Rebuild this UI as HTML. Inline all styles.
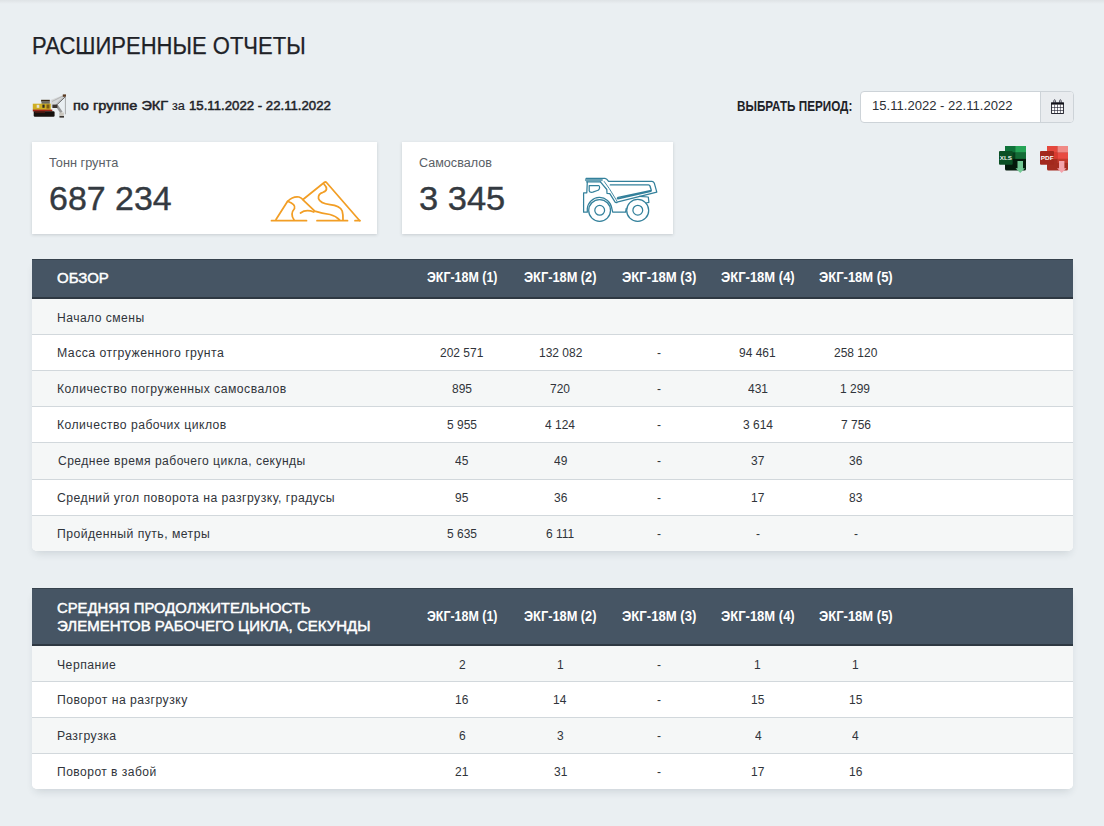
<!DOCTYPE html>
<html lang="ru"><head><meta charset="utf-8"><title>Расширенные отчеты</title>
<style>
html,body{margin:0;padding:0;}
body{width:1104px;height:826px;overflow:hidden;position:relative;background:#eaeff2;font-family:"Liberation Sans",sans-serif;}
.t{position:absolute;white-space:nowrap;transform-origin:0 0;}
.box{position:absolute;}
</style></head><body>
<div class="box" style="left:0;top:0;width:1104px;height:4px;background:linear-gradient(rgba(0,0,0,0.05),rgba(0,0,0,0));"></div>
<div class="box" style="left:32px;top:142px;width:345px;height:92px;background:#fff;box-shadow:0 1px 3px rgba(40,50,60,0.18);"></div>
<div class="box" style="left:402px;top:142px;width:271px;height:92px;background:#fff;box-shadow:0 1px 3px rgba(40,50,60,0.18);"></div>
<div class="box" style="left:32px;top:259px;width:1041px;height:292px;background:#fff;border-radius:0 0 5px 5px;box-shadow:0 5px 8px -3px rgba(40,55,70,0.16);overflow:hidden;">
<div class="box" style="left:0;top:0;width:1041px;height:39.5px;background:#465564;"></div>
<div class="box" style="left:0;top:0;width:1041px;height:1px;background:#36424d;"></div>
<div class="box" style="left:0;top:38.0px;width:1041px;height:1.5px;background:#2e3842;"></div>
<div class="box" style="left:0;top:39.5px;width:1041px;height:35.5px;background:#f5f7f7;"></div>
<div class="box" style="left:0;top:75px;width:1041px;height:36px;background:#ffffff;"></div>
<div class="box" style="left:0;top:111px;width:1041px;height:36px;background:#f5f7f7;"></div>
<div class="box" style="left:0;top:147px;width:1041px;height:36px;background:#ffffff;"></div>
<div class="box" style="left:0;top:183px;width:1041px;height:37px;background:#f5f7f7;"></div>
<div class="box" style="left:0;top:220px;width:1041px;height:36px;background:#ffffff;"></div>
<div class="box" style="left:0;top:256px;width:1041px;height:36px;background:#f5f7f7;"></div>
<div class="box" style="left:0;top:75px;width:1041px;height:1px;background:#d2d8dc;"></div>
<div class="box" style="left:0;top:111px;width:1041px;height:1px;background:#d2d8dc;"></div>
<div class="box" style="left:0;top:147px;width:1041px;height:1px;background:#d2d8dc;"></div>
<div class="box" style="left:0;top:183px;width:1041px;height:1px;background:#d2d8dc;"></div>
<div class="box" style="left:0;top:220px;width:1041px;height:1px;background:#d2d8dc;"></div>
<div class="box" style="left:0;top:256px;width:1041px;height:1px;background:#d2d8dc;"></div>
</div>
<div class="box" style="left:32px;top:588px;width:1041px;height:201px;background:#fff;border-radius:0 0 5px 5px;box-shadow:0 5px 8px -3px rgba(40,55,70,0.16);overflow:hidden;">
<div class="box" style="left:0;top:0;width:1041px;height:57.60000000000002px;background:#465564;"></div>
<div class="box" style="left:0;top:0;width:1041px;height:1px;background:#36424d;"></div>
<div class="box" style="left:0;top:56.10000000000002px;width:1041px;height:1.5px;background:#2e3842;"></div>
<div class="box" style="left:0;top:57.60000000000002px;width:1041px;height:35.39999999999998px;background:#f5f7f7;"></div>
<div class="box" style="left:0;top:93px;width:1041px;height:36px;background:#ffffff;"></div>
<div class="box" style="left:0;top:129px;width:1041px;height:36px;background:#f5f7f7;"></div>
<div class="box" style="left:0;top:165px;width:1041px;height:36px;background:#ffffff;"></div>
<div class="box" style="left:0;top:93px;width:1041px;height:1px;background:#d2d8dc;"></div>
<div class="box" style="left:0;top:129px;width:1041px;height:1px;background:#d2d8dc;"></div>
<div class="box" style="left:0;top:165px;width:1041px;height:1px;background:#d2d8dc;"></div>
</div>
<svg class="box" style="left:30px;top:90px" width="40" height="32" viewBox="30 90 40 32">
<path d="M50.5 100 L63.5 95 L65.6 96.6 L54.5 107.6 L50.5 107.2 Z" fill="#d6d8d9"/>
<path d="M54.3 107.3 L65.3 96.8" stroke="#4e4e4e" stroke-width="0.8"/>
<path d="M52 101.5 L63.8 95.6" stroke="#9a9a9a" stroke-width="0.6"/>
<path d="M56.5 104 L63.5 97.2" stroke="#8c8c8c" stroke-width="0.5"/>
<rect x="62.8" y="94.4" width="3.2" height="2.4" fill="#5b3b22"/>
<line x1="65.4" y1="96.5" x2="65.4" y2="114.3" stroke="#8c8c8c" stroke-width="0.7"/>
<path d="M56 104.5 L61.5 112.5" stroke="#9a9a9a" stroke-width="2.6"/>
<path d="M59 112.5 H63.8 V117.3 H59.5 Z" fill="#c9c5bd"/>
<rect x="59.5" y="116" width="4.5" height="1.6" fill="#3a3633"/>
<rect x="52.4" y="104.6" width="5" height="3.4" fill="#3b3430"/>
<rect x="41.1" y="99.8" width="8.7" height="1.8" fill="#3a2812"/>
<rect x="41.5" y="101.5" width="8.3" height="2.4" fill="#6d6a60"/>
<rect x="32.8" y="103.7" width="18" height="6.2" fill="#cfae22"/>
<rect x="36.7" y="104.8" width="2.6" height="3" fill="#e8e4d0"/>
<rect x="42.4" y="104.6" width="2.2" height="3.2" fill="#2c2a26"/>
<rect x="46.5" y="104.5" width="3" height="4" fill="#7a5a18"/>
<rect x="32.8" y="109.6" width="19.5" height="1.9" fill="#9e2418"/>
<path d="M33.7 111.2 H53.5 Q54.6 111.2 54.6 112.5 V115.6 Q54.6 116.8 53.5 116.8 H35 Q33.7 116.8 33.7 115.6 Z" fill="#17110e"/>
<rect x="35" y="111.2" width="10" height="1.5" fill="#5a1a12"/>
</svg>
<div class="box" style="left:860px;top:91px;width:212px;height:30px;border:1px solid #cdd3d8;border-radius:4px;background:#fff;overflow:hidden;">
<div class="box" style="left:179px;top:0;width:33px;height:30px;background:#e9ecef;border-left:1px solid #cdd3d8;"></div>
</div>
<svg class="box" style="left:1050px;top:98px" width="16" height="17" viewBox="1050 98 16 17">
<rect x="1051.6" y="103" width="11.8" height="10.5" fill="#fff" stroke="#15151f" stroke-width="0.9"/>
<rect x="1051.2" y="102.5" width="12.6" height="2.1" fill="#111118"/>
<path d="M1053.6 103 Q1053.8 99.6 1054.6 99.6 Q1055.4 99.6 1055.6 103 M1059.4 103 Q1059.6 99.6 1060.4 99.6 Q1061.2 99.6 1061.4 103" fill="none" stroke="#2a2a3a" stroke-width="0.85"/>
<path d="M1054.6 104.5 V113.5 M1057.5 104.5 V113.5 M1060.4 104.5 V113.5 M1051.5 107.5 H1063.5 M1051.5 110.5 H1063.5" stroke="#1a1a2a" stroke-width="0.6"/>
</svg>
<svg class="box" style="left:996px;top:143px" width="76" height="32" viewBox="996 143 76 32">
<g>
<rect x="1005" y="146" width="21" height="24.5" rx="1.5" fill="#041a0b"/>
<rect x="1005" y="146" width="10.2" height="6.7" fill="#10723a"/>
<rect x="1015.2" y="146" width="10.8" height="6.7" fill="#26a457"/>
<rect x="1005" y="152.7" width="10.2" height="6.2" fill="#073d1c"/>
<rect x="1015.2" y="152.7" width="10.8" height="6.2" fill="#146b36"/>
<rect x="999" y="151" width="13.7" height="13.8" rx="1" fill="#0b5024"/>
<text x="1005.9" y="159.8" font-family="Liberation Sans" font-size="5.6" font-weight="700" fill="#e8efe8" text-anchor="middle" transform="translate(1005.9 0) scale(1.12 1) translate(-1005.9 0)">XLS</text>
<path d="M1017.5 161 H1023 V168.3 H1025 L1020.25 173 L1015.5 168.3 H1017.5 Z" fill="#73c995"/>
</g>
<g>
<rect x="1047" y="146" width="21" height="24.5" rx="1.5" fill="#a52c20"/>
<rect x="1047" y="146" width="10.5" height="6.7" fill="#e4483d"/>
<rect x="1057.5" y="146" width="10.5" height="6.7" fill="#f08a86"/>
<rect x="1047" y="152.7" width="10.5" height="6.2" fill="#d8392f"/>
<rect x="1057.5" y="152.7" width="10.5" height="6.2" fill="#e84b42"/>
<rect x="1057.5" y="158.9" width="10.5" height="4" fill="#c33a2e"/>
<rect x="1040" y="151" width="14" height="13.7" rx="1" fill="#a3281d"/>
<text x="1047.2" y="159.8" font-family="Liberation Sans" font-size="5.8" font-weight="700" fill="#fff" text-anchor="middle" transform="translate(1047.2 0) scale(1.1 1) translate(-1047.2 0)">PDF</text>
<path d="M1059 161 H1064.4 V168.3 H1066.5 L1061.7 173 L1057 168.3 H1059 Z" fill="#f3a3ab"/>
</g>
</svg>
<svg class="box" style="left:265px;top:175px" width="100" height="52" viewBox="265 175 100 52">
<g fill="none" stroke="#f29e25" stroke-width="1.75" stroke-linecap="round" stroke-linejoin="round">
<path d="M271.5 220.7 H306.5 M317 220.7 H347.5 M355 220.7 H360"/>
<path d="M303 199.5 L324.5 182.3 Q325.5 181.6 326.5 182.5 L359.5 220.5"/>
<path d="M276 219.5 L287.6 201.3 Q293 196 299 197 Q301.5 197.8 303 199.8 L314.8 211.2 Q322 213.5 330 214.5 Q336 216 339.5 219.8"/>
<path d="M287.6 201.3 Q296 204.5 294.5 208.5 Q289.8 214 294 219.8"/>
<path d="M300.5 213 Q306 209 313.8 212"/>
<path d="M324 184.2 Q329.5 190 323 192.3 Q318 193.5 318.5 198.5 Q320 203.5 330 204.6 Q340 205.5 342.2 211 Q343.3 215 343 220"/>
</g></svg>
<svg class="box" style="left:575px;top:170px" width="90" height="58" viewBox="575 170 90 58">
<g fill="none" stroke="#33809b" stroke-width="1.25" stroke-linejoin="round" stroke-linecap="round">
<path d="M586.2 179.9 H601.5" stroke="#6aa3b6" stroke-width="2.6"/>
<path d="M586.1 178.3 H605 Q606.8 178.5 608.6 181.4 H652 Q653.8 181.6 654.3 183.2 L656.8 192.2 L616 202.3"/>
<path d="M586.6 181.8 H600.4"/>
<path d="M610.3 184.9 H648.5 Q649.6 185 650 186 L651.3 190.4 L618.2 197.4 Q616.6 198.3 618 198.9 L651 191.2" stroke-width="1.4"/>
<path d="M600.4 181.8 L606.8 189.5 L607 193.3 L609.8 193.6 L614.8 201.7 Q615.3 202.8 617 202.6"/>
<path d="M604.2 181.5 L609.3 188.6 L616.8 200.8" stroke-width="0.9"/>
<path d="M587.3 182 L586.8 192.8 H583.6 V212.2 H587.3 V208.5 A12.3 12.3 0 0 1 611.7 208 L612.7 212.2 H625.6 L626.2 208.5"/>
<path d="M589.2 185.5 H598.6 Q599.6 185.6 599.6 187.5 L599.2 189 Q598.8 190.2 597.4 190.5 L592.8 192.2 Q589.6 192.7 589.2 190.8 Z"/>
<circle cx="599.6" cy="210.4" r="10.9"/>
<circle cx="599.7" cy="210.3" r="4.9"/>
<circle cx="637.7" cy="210.4" r="11"/>
<circle cx="637.8" cy="210.2" r="4.9"/>
<path d="M639.2 196.4 L648.3 197 L648.9 202.3 L646 203"/>
</g></svg>
<div class="t" style="left:31.84px;top:31.54px;font-size:24.06px;line-height:28px;color:#1e2227;transform:scaleX(0.9155);-webkit-text-stroke:0.25px #1e2227;">РАСШИРЕННЫЕ ОТЧЕТЫ</div>
<div class="t" style="left:72.55px;top:96.77px;font-size:13.52px;line-height:18px;color:#1e2227;transform:scaleX(1.0759);-webkit-text-stroke:0.5px #1e2227;">по группе ЭКГ</div>
<div class="t" style="left:171.65px;top:97.46px;font-size:13.40px;line-height:17px;color:#1e2227;transform:scaleX(0.9492);-webkit-text-stroke:0.2px #1e2227;">за</div>
<div class="t" style="left:189.01px;top:97.32px;font-size:13.37px;line-height:17px;color:#1e2227;transform:scaleX(0.9878);-webkit-text-stroke:0.5px #1e2227;">15.11.2022 - 22.11.2022</div>
<div class="t" style="left:736.64px;top:97.45px;font-size:14.00px;line-height:18px;color:#1e2227;font-weight:700;transform:scaleX(0.8356);">ВЫБРАТЬ ПЕРИОД:</div>
<div class="t" style="left:871.52px;top:98.02px;font-size:12.65px;line-height:17px;color:#2b3036;transform:scaleX(1.0342);">15.11.2022 - 22.11.2022</div>
<div class="t" style="left:49.34px;top:153.87px;font-size:13.37px;line-height:17px;color:#5a6066;transform:scaleX(0.9548);">Тонн грунта</div>
<div class="t" style="left:418.87px;top:154.67px;font-size:12.21px;line-height:16px;color:#5a6066;transform:scaleX(1.0302);">Самосвалов</div>
<div class="t" style="left:49.20px;top:179.07px;font-size:33.87px;line-height:38px;color:#343a41;transform:scaleX(1.0030);-webkit-text-stroke:0.4px #343a41;">687 234</div>
<div class="t" style="left:419.29px;top:179.27px;font-size:33.87px;line-height:38px;color:#343a41;transform:scaleX(1.0174);-webkit-text-stroke:0.4px #343a41;">3 345</div>
<div class="t" style="left:56.93px;top:269.17px;font-size:13.88px;line-height:18px;color:#ffffff;transform:scaleX(1.0795);-webkit-text-stroke:0.45px #ffffff;">ОБЗОР</div>
<div class="t" style="left:426.99px;top:269.25px;font-size:13.71px;line-height:18px;color:#ffffff;font-weight:700;transform:scaleX(0.9072);">ЭКГ-18М (1)</div>
<div class="t" style="left:524.28px;top:269.25px;font-size:13.71px;line-height:18px;color:#ffffff;font-weight:700;transform:scaleX(0.9333);">ЭКГ-18М (2)</div>
<div class="t" style="left:621.87px;top:269.25px;font-size:13.71px;line-height:18px;color:#ffffff;font-weight:700;transform:scaleX(0.9568);">ЭКГ-18М (3)</div>
<div class="t" style="left:721.07px;top:269.25px;font-size:13.71px;line-height:18px;color:#ffffff;font-weight:700;transform:scaleX(0.9489);">ЭКГ-18М (4)</div>
<div class="t" style="left:818.87px;top:269.25px;font-size:13.71px;line-height:18px;color:#ffffff;font-weight:700;transform:scaleX(0.9489);">ЭКГ-18М (5)</div>
<div class="t" style="left:57.13px;top:308.77px;font-size:13.08px;line-height:17px;color:#30343a;letter-spacing:0.5px;transform:scaleX(0.9251);">Начало смены</div>
<div class="t" style="left:57.12px;top:344.27px;font-size:13.08px;line-height:17px;color:#30343a;letter-spacing:0.5px;transform:scaleX(0.9389);">Масса отгруженного грунта</div>
<div class="t" style="left:440.30px;top:344.17px;font-size:13.37px;line-height:17px;color:#30343a;transform:scaleX(0.8969);">202 571</div>
<div class="t" style="left:538.55px;top:344.17px;font-size:13.37px;line-height:17px;color:#30343a;transform:scaleX(0.8969);">132 082</div>
<div class="t" style="left:657.02px;top:344.17px;font-size:13.37px;line-height:17px;color:#30343a;transform:scaleX(0.8969);">-</div>
<div class="t" style="left:739.47px;top:344.17px;font-size:13.37px;line-height:17px;color:#30343a;transform:scaleX(0.8969);">94 461</div>
<div class="t" style="left:833.84px;top:344.17px;font-size:13.37px;line-height:17px;color:#30343a;transform:scaleX(0.8969);">258 120</div>
<div class="t" style="left:57.12px;top:380.27px;font-size:13.08px;line-height:17px;color:#30343a;letter-spacing:0.5px;transform:scaleX(0.9336);">Количество погруженных самосвалов</div>
<div class="t" style="left:452.00px;top:380.17px;font-size:13.37px;line-height:17px;color:#30343a;transform:scaleX(0.8969);">895</div>
<div class="t" style="left:550.31px;top:380.17px;font-size:13.37px;line-height:17px;color:#30343a;transform:scaleX(0.8969);">720</div>
<div class="t" style="left:657.02px;top:380.17px;font-size:13.37px;line-height:17px;color:#30343a;transform:scaleX(0.8969);">-</div>
<div class="t" style="left:747.95px;top:380.17px;font-size:13.37px;line-height:17px;color:#30343a;transform:scaleX(0.8969);">431</div>
<div class="t" style="left:840.42px;top:380.17px;font-size:13.37px;line-height:17px;color:#30343a;transform:scaleX(0.8969);">1 299</div>
<div class="t" style="left:57.13px;top:416.27px;font-size:13.08px;line-height:17px;color:#30343a;letter-spacing:0.5px;transform:scaleX(0.9312);">Количество рабочих циклов</div>
<div class="t" style="left:447.00px;top:416.17px;font-size:13.37px;line-height:17px;color:#30343a;transform:scaleX(0.8969);">5 955</div>
<div class="t" style="left:545.43px;top:416.17px;font-size:13.37px;line-height:17px;color:#30343a;transform:scaleX(0.8969);">4 124</div>
<div class="t" style="left:657.02px;top:416.17px;font-size:13.37px;line-height:17px;color:#30343a;transform:scaleX(0.8969);">-</div>
<div class="t" style="left:742.74px;top:416.17px;font-size:13.37px;line-height:17px;color:#30343a;transform:scaleX(0.8969);">3 614</div>
<div class="t" style="left:840.54px;top:416.17px;font-size:13.37px;line-height:17px;color:#30343a;transform:scaleX(0.8969);">7 756</div>
<div class="t" style="left:57.50px;top:452.27px;font-size:13.08px;line-height:17px;color:#30343a;letter-spacing:0.5px;transform:scaleX(0.9235);">Среднее время рабочего цикла, секунды</div>
<div class="t" style="left:455.46px;top:452.17px;font-size:13.37px;line-height:17px;color:#30343a;transform:scaleX(0.8969);">45</div>
<div class="t" style="left:553.89px;top:452.17px;font-size:13.37px;line-height:17px;color:#30343a;transform:scaleX(0.8969);">49</div>
<div class="t" style="left:657.02px;top:452.17px;font-size:13.37px;line-height:17px;color:#30343a;transform:scaleX(0.8969);">-</div>
<div class="t" style="left:751.20px;top:452.17px;font-size:13.37px;line-height:17px;color:#30343a;transform:scaleX(0.8969);">37</div>
<div class="t" style="left:848.97px;top:452.17px;font-size:13.37px;line-height:17px;color:#30343a;transform:scaleX(0.8969);">36</div>
<div class="t" style="left:57.49px;top:489.27px;font-size:13.08px;line-height:17px;color:#30343a;letter-spacing:0.5px;transform:scaleX(0.9343);">Средний угол поворота на разгрузку, градусы</div>
<div class="t" style="left:455.31px;top:489.17px;font-size:13.37px;line-height:17px;color:#30343a;transform:scaleX(0.8969);">95</div>
<div class="t" style="left:553.77px;top:489.17px;font-size:13.37px;line-height:17px;color:#30343a;transform:scaleX(0.8969);">36</div>
<div class="t" style="left:657.02px;top:489.17px;font-size:13.37px;line-height:17px;color:#30343a;transform:scaleX(0.8969);">-</div>
<div class="t" style="left:750.96px;top:489.17px;font-size:13.37px;line-height:17px;color:#30343a;transform:scaleX(0.8969);">17</div>
<div class="t" style="left:848.94px;top:489.17px;font-size:13.37px;line-height:17px;color:#30343a;transform:scaleX(0.8969);">83</div>
<div class="t" style="left:57.12px;top:525.27px;font-size:13.08px;line-height:17px;color:#30343a;letter-spacing:0.5px;transform:scaleX(0.9331);">Пройденный путь, метры</div>
<div class="t" style="left:447.00px;top:525.17px;font-size:13.37px;line-height:17px;color:#30343a;transform:scaleX(0.8969);">5 635</div>
<div class="t" style="left:546.26px;top:525.17px;font-size:13.37px;line-height:17px;color:#30343a;transform:scaleX(0.8969);">6 111</div>
<div class="t" style="left:657.02px;top:525.17px;font-size:13.37px;line-height:17px;color:#30343a;transform:scaleX(0.8969);">-</div>
<div class="t" style="left:755.82px;top:525.17px;font-size:13.37px;line-height:17px;color:#30343a;transform:scaleX(0.8969);">-</div>
<div class="t" style="left:853.62px;top:525.17px;font-size:13.37px;line-height:17px;color:#30343a;transform:scaleX(0.8969);">-</div>
<div class="t" style="left:56.86px;top:598.96px;font-size:14.46px;line-height:18px;color:#ffffff;transform:scaleX(1.0267);-webkit-text-stroke:0.45px #ffffff;">СРЕДНЯЯ ПРОДОЛЖИТЕЛЬНОСТЬ</div>
<div class="t" style="left:56.85px;top:616.86px;font-size:14.46px;line-height:18px;color:#ffffff;transform:scaleX(1.0385);-webkit-text-stroke:0.45px #ffffff;">ЭЛЕМЕНТОВ РАБОЧЕГО ЦИКЛА, СЕКУНДЫ</div>
<div class="t" style="left:426.99px;top:607.85px;font-size:13.71px;line-height:18px;color:#ffffff;font-weight:700;transform:scaleX(0.9072);">ЭКГ-18М (1)</div>
<div class="t" style="left:524.28px;top:607.85px;font-size:13.71px;line-height:18px;color:#ffffff;font-weight:700;transform:scaleX(0.9333);">ЭКГ-18М (2)</div>
<div class="t" style="left:621.87px;top:607.85px;font-size:13.71px;line-height:18px;color:#ffffff;font-weight:700;transform:scaleX(0.9568);">ЭКГ-18М (3)</div>
<div class="t" style="left:721.07px;top:607.85px;font-size:13.71px;line-height:18px;color:#ffffff;font-weight:700;transform:scaleX(0.9489);">ЭКГ-18М (4)</div>
<div class="t" style="left:818.87px;top:607.85px;font-size:13.71px;line-height:18px;color:#ffffff;font-weight:700;transform:scaleX(0.9489);">ЭКГ-18М (5)</div>
<div class="t" style="left:57.18px;top:655.87px;font-size:13.08px;line-height:17px;color:#30343a;letter-spacing:0.5px;transform:scaleX(0.9346);">Черпание</div>
<div class="t" style="left:458.64px;top:655.77px;font-size:13.37px;line-height:17px;color:#30343a;transform:scaleX(0.8969);">2</div>
<div class="t" style="left:556.89px;top:655.77px;font-size:13.37px;line-height:17px;color:#30343a;transform:scaleX(0.8969);">1</div>
<div class="t" style="left:657.02px;top:655.77px;font-size:13.37px;line-height:17px;color:#30343a;transform:scaleX(0.8969);">-</div>
<div class="t" style="left:754.29px;top:655.77px;font-size:13.37px;line-height:17px;color:#30343a;transform:scaleX(0.8969);">1</div>
<div class="t" style="left:852.09px;top:655.77px;font-size:13.37px;line-height:17px;color:#30343a;transform:scaleX(0.8969);">1</div>
<div class="t" style="left:57.12px;top:691.27px;font-size:13.08px;line-height:17px;color:#30343a;letter-spacing:0.5px;transform:scaleX(0.9337);">Поворот на разгрузку</div>
<div class="t" style="left:455.13px;top:691.17px;font-size:13.37px;line-height:17px;color:#30343a;transform:scaleX(0.8969);">16</div>
<div class="t" style="left:553.44px;top:691.17px;font-size:13.37px;line-height:17px;color:#30343a;transform:scaleX(0.8969);">14</div>
<div class="t" style="left:657.02px;top:691.17px;font-size:13.37px;line-height:17px;color:#30343a;transform:scaleX(0.8969);">-</div>
<div class="t" style="left:750.93px;top:691.17px;font-size:13.37px;line-height:17px;color:#30343a;transform:scaleX(0.8969);">15</div>
<div class="t" style="left:848.73px;top:691.17px;font-size:13.37px;line-height:17px;color:#30343a;transform:scaleX(0.8969);">15</div>
<div class="t" style="left:57.12px;top:727.27px;font-size:13.08px;line-height:17px;color:#30343a;letter-spacing:0.5px;transform:scaleX(0.9365);">Разгрузка</div>
<div class="t" style="left:458.61px;top:727.17px;font-size:13.37px;line-height:17px;color:#30343a;transform:scaleX(0.8969);">6</div>
<div class="t" style="left:557.10px;top:727.17px;font-size:13.37px;line-height:17px;color:#30343a;transform:scaleX(0.8969);">3</div>
<div class="t" style="left:657.02px;top:727.17px;font-size:13.37px;line-height:17px;color:#30343a;transform:scaleX(0.8969);">-</div>
<div class="t" style="left:754.50px;top:727.17px;font-size:13.37px;line-height:17px;color:#30343a;transform:scaleX(0.8969);">4</div>
<div class="t" style="left:852.30px;top:727.17px;font-size:13.37px;line-height:17px;color:#30343a;transform:scaleX(0.8969);">4</div>
<div class="t" style="left:57.13px;top:763.27px;font-size:13.08px;line-height:17px;color:#30343a;letter-spacing:0.5px;transform:scaleX(0.9230);">Поворот в забой</div>
<div class="t" style="left:455.31px;top:763.17px;font-size:13.37px;line-height:17px;color:#30343a;transform:scaleX(0.8969);">21</div>
<div class="t" style="left:553.80px;top:763.17px;font-size:13.37px;line-height:17px;color:#30343a;transform:scaleX(0.8969);">31</div>
<div class="t" style="left:657.02px;top:763.17px;font-size:13.37px;line-height:17px;color:#30343a;transform:scaleX(0.8969);">-</div>
<div class="t" style="left:750.96px;top:763.17px;font-size:13.37px;line-height:17px;color:#30343a;transform:scaleX(0.8969);">17</div>
<div class="t" style="left:848.73px;top:763.17px;font-size:13.37px;line-height:17px;color:#30343a;transform:scaleX(0.8969);">16</div>
</body></html>
